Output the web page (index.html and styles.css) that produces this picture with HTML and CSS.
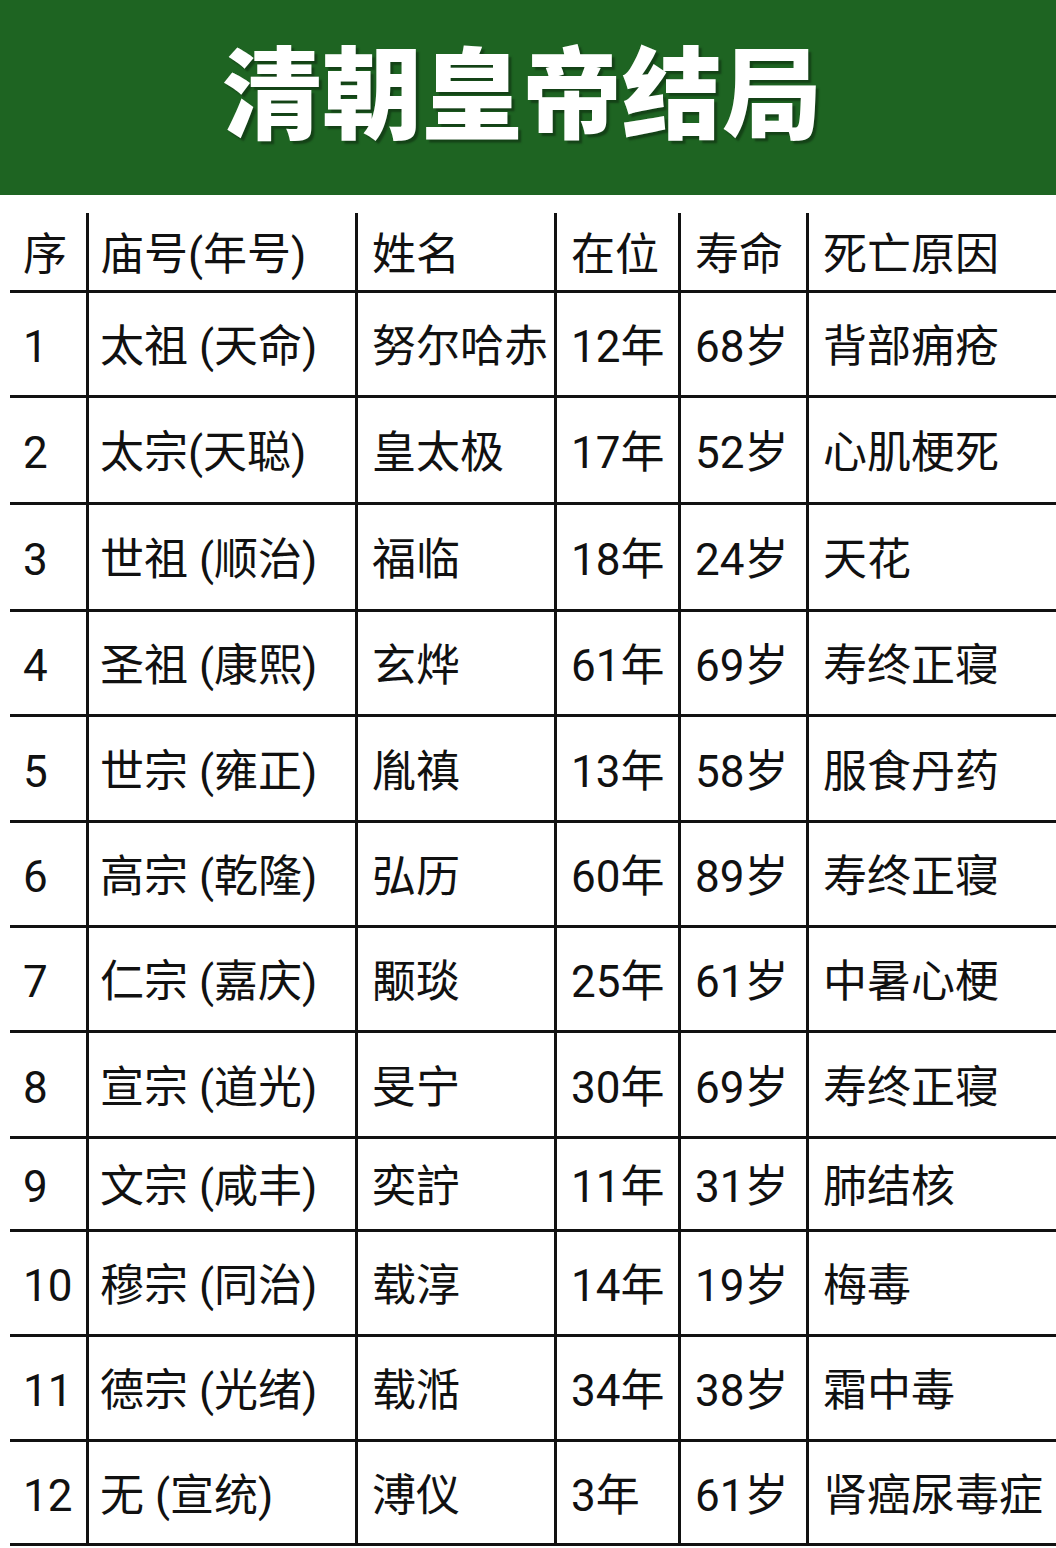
FILE: index.html
```html
<!DOCTYPE html>
<html lang="zh-CN">
<head>
<meta charset="utf-8">
<title>清朝皇帝结局</title>
<link rel="stylesheet" href="styles.css">
</head>
<body>
<header class="banner"><h1 class="title">清朝皇帝结局</h1></header>
<div class="table">
  <div class="row head" style="height:80px">
    <div class="cell c1">序</div><div class="cell c2">庙号(年号)</div><div class="cell">姓名</div><div class="cell">在位</div><div class="cell">寿命</div><div class="cell">死亡原因</div>
  </div>
  <div class="row" style="height:105px">
    <div class="cell c1">1</div><div class="cell c2">太祖 (天命)</div><div class="cell">努尔哈赤</div><div class="cell">12年</div><div class="cell">68岁</div><div class="cell">背部痈疮</div>
  </div>
  <div class="row" style="height:107px">
    <div class="cell c1">2</div><div class="cell c2">太宗(天聪)</div><div class="cell">皇太极</div><div class="cell">17年</div><div class="cell">52岁</div><div class="cell">心肌梗死</div>
  </div>
  <div class="row" style="height:107px">
    <div class="cell c1">3</div><div class="cell c2">世祖 (顺治)</div><div class="cell">福临</div><div class="cell">18年</div><div class="cell">24岁</div><div class="cell">天花</div>
  </div>
  <div class="row" style="height:105px">
    <div class="cell c1">4</div><div class="cell c2">圣祖 (康熙)</div><div class="cell">玄烨</div><div class="cell">61年</div><div class="cell">69岁</div><div class="cell">寿终正寝</div>
  </div>
  <div class="row" style="height:106px">
    <div class="cell c1">5</div><div class="cell c2">世宗 (雍正)</div><div class="cell">胤禛</div><div class="cell">13年</div><div class="cell">58岁</div><div class="cell">服食丹药</div>
  </div>
  <div class="row" style="height:105px">
    <div class="cell c1">6</div><div class="cell c2">高宗 (乾隆)</div><div class="cell">弘历</div><div class="cell">60年</div><div class="cell">89岁</div><div class="cell">寿终正寝</div>
  </div>
  <div class="row" style="height:105px">
    <div class="cell c1">7</div><div class="cell c2">仁宗 (嘉庆)</div><div class="cell">颙琰</div><div class="cell">25年</div><div class="cell">61岁</div><div class="cell">中暑心梗</div>
  </div>
  <div class="row" style="height:106px">
    <div class="cell c1">8</div><div class="cell c2">宣宗 (道光)</div><div class="cell">旻宁</div><div class="cell">30年</div><div class="cell">69岁</div><div class="cell">寿终正寝</div>
  </div>
  <div class="row" style="height:93px">
    <div class="cell c1">9</div><div class="cell c2">文宗 (咸丰)</div><div class="cell">奕詝</div><div class="cell">11年</div><div class="cell">31岁</div><div class="cell">肺结核</div>
  </div>
  <div class="row" style="height:105px">
    <div class="cell c1">10</div><div class="cell c2">穆宗 (同治)</div><div class="cell">载淳</div><div class="cell">14年</div><div class="cell">19岁</div><div class="cell">梅毒</div>
  </div>
  <div class="row" style="height:105px">
    <div class="cell c1">11</div><div class="cell c2">德宗 (光绪)</div><div class="cell">载湉</div><div class="cell">34年</div><div class="cell">38岁</div><div class="cell">霜中毒</div>
  </div>
  <div class="row" style="height:104px">
    <div class="cell c1">12</div><div class="cell c2">无 (宣统)</div><div class="cell">溥仪</div><div class="cell">3年</div><div class="cell">61岁</div><div class="cell">肾癌尿毒症</div>
  </div>
</div>
</body>
</html>
```
FILE: styles.css
```css
html, body {
  margin: 0;
  padding: 0;
  background: #ffffff;
}
body {
  width: 1056px;
  overflow: hidden;
  font-family: Roboto, "Noto Sans CJK SC", sans-serif;
  color: #111111;
}
.banner {
  height: 195px;
  box-sizing: border-box;
  background: #1e6422;
  padding-top: 38px;
  padding-right: 12px;
}
.title {
  margin: 0;
  text-align: center;
  font-family: "Noto Sans CJK SC", sans-serif;
  font-weight: 900;
  font-size: 100px;
  line-height: 100px;
  color: #ffffff;
  text-shadow: 3px 3px 2px rgba(0, 0, 0, 0.35);
}
.table {
  margin-top: 18px;
  margin-left: 10px;
}
.row {
  display: grid;
  grid-template-columns: 76px 269px 199px 124px 128px 1fr;
  box-sizing: border-box;
  border-bottom: 3px solid #111111;
}
.cell {
  display: flex;
  align-items: center;
  border-left: 3px solid #111111;
  padding-left: 14px;
  padding-top: 6px;
  font-size: 44px;
  line-height: 1;
  white-space: nowrap;
}
.cell.c1 {
  border-left: none;
  padding-left: 13px;
}
.cell.c2 {
  padding-left: 11px;
}
```
